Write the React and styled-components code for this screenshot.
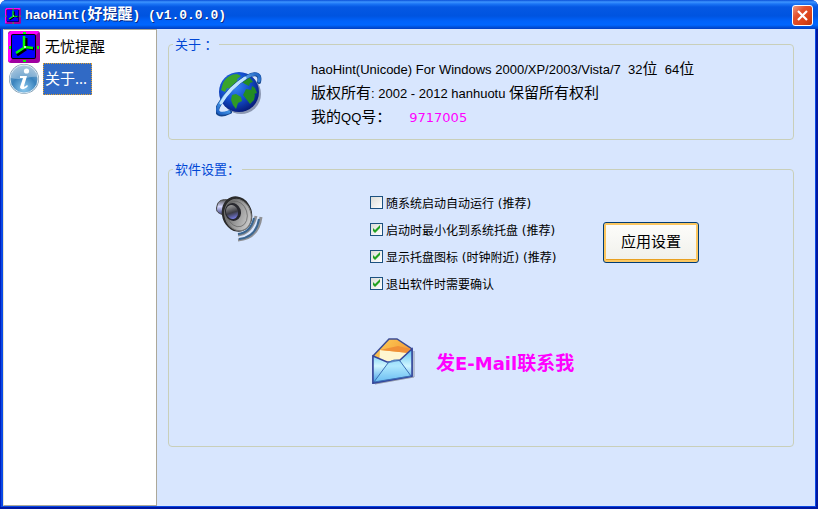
import React, { useState } from "react";
import styled, { createGlobalStyle } from "styled-components";

const Global = createGlobalStyle`
  *, *::before, *::after { box-sizing: border-box; }
  body { margin: 0; background: #fff; font-family: "Noto Sans", "Noto Sans CJK SC", sans-serif; }
`;

const Window = styled.div`
  min-height: 100vh;
  display: flex;
  flex-direction: column;
  border-radius: 7px 7px 0 0;
  overflow: hidden;
  background: #0a48e4;
  box-shadow: inset -2px -2px #0018a0, inset 1px 0 #0020c0;
`;

const TitleBar = styled.header`
  flex: none;
  height: 29px;
  display: flex;
  align-items: center;
  gap: 4px;
  padding: 2px 5px 0;
  background: linear-gradient(
    #0a4fd8 0, #3d95ff 2px, #1a74f5 4px, #0558e3 7px,
    #0054e0 16px, #0062fa 21px, #0066ff 25px, #0051dc 27px, #003fc4 29px
  );
`;

const Title = styled.h1`
  flex: 1;
  margin: 0;
  font: bold 13px/20px "Liberation Mono", "Noto Sans CJK SC", monospace;
  color: #fff;
  text-shadow: 1px 1px #0a2a85;
  white-space: pre;
`;

const Large = styled.span`
  font-size: ${(p) => p.$size}px;
`;

const CloseButton = styled.button`
  width: 21px;
  height: 21px;
  padding: 0;
  display: grid;
  place-items: center;
  border: 1px solid #fff;
  border-radius: 3px;
  background: linear-gradient(135deg, #f09a80, #e2512e 35%, #dc4318 70%, #b83410);
`;

const Body = styled.div`
  flex: 1;
  display: flex;
  margin: 0 3px 3px;
  background: #d8e6fe;
`;

const Sidebar = styled.nav`
  flex: none;
  width: 154px;
  padding: 1px 0 0 4px;
  border: 1px solid #aca899;
  border-left-color: #e6e3cf;
  background: #fff;
`;

const NavItem = styled.button`
  display: flex;
  align-items: center;
  gap: 3px;
  height: 32px;
  padding: 0;
  border: 0;
  background: none;
  font: 15px/28px "Noto Sans", "Noto Sans CJK SC", sans-serif;
  color: #000;
`;

const NavLabel = styled.span`
  padding: 0 ${(p) => (p.$active ? 4 : 1)}px 2px 1px;
  white-space: nowrap;
  border: 1px dotted ${(p) => (p.$active ? "#e0a030" : "transparent")};
  background: ${(p) => (p.$active ? "#316ac5" : "none")};
  color: ${(p) => (p.$active ? "#fff" : "#000")};
`;

const Main = styled.main`
  flex: 1;
  min-width: 0;
  display: flex;
  flex-direction: column;
  gap: 21px;
  padding: 7px 21px 24px 11px;
`;

const Group = styled.fieldset`
  margin: 0;
  min-width: 0;
  padding: ${(p) => p.$top}px 8px ${(p) => p.$bottom}px 47px;
  border: 1px solid #c9cfb9;
  border-radius: 4px;
`;

const Legend = styled.legend`
  margin-left: -43px;
  padding: 0 2px;
  font-size: 13px;
  line-height: 16px;
  color: #0046d5;
  white-space: pre;
`;

const AboutRow = styled.div`
  display: flex;
  align-items: center;
  gap: 47px;
`;

const AboutText = styled.div`
  font: 13px/24px "Liberation Sans", "Noto Sans CJK SC", sans-serif;
  color: #000;
`;

const Line = styled.p`
  margin: 0;
  height: 24px;
  white-space: pre;
`;

const QQ = styled.a`
  margin-left: 18px;
  font: 13px "DejaVu Sans", sans-serif;
  color: #f0f;
  text-decoration: none;
`;

const SettingsGrid = styled.div`
  display: grid;
  grid-template-columns: 154px 233px auto;
  justify-content: start;
  align-items: start;
`;

const IconCell = styled.div`
  padding-top: 6px;
`;

const Option = styled.label`
  display: flex;
  align-items: center;
  gap: 3px;
  height: 27px;
  font: 12px "DejaVu Sans", "Noto Sans CJK SC", sans-serif;
  white-space: pre;
`;

const Checkbox = styled.input`
  appearance: none;
  flex: none;
  width: 13px;
  height: 13px;
  margin: 0;
  border: 1px solid #1c5180;
  background: linear-gradient(135deg, #dcdcd7, #fff);
  &:checked {
    background:
      url("data:image/svg+xml,%3Csvg xmlns='http://www.w3.org/2000/svg' viewBox='0 0 11 11'%3E%3Cpath d='M2 4v3l2 2 5-5V1L4 6z' fill='%2321a121'/%3E%3C/svg%3E"),
      linear-gradient(135deg, #dcdcd7, #fff);
  }
`;

const ApplyButton = styled.button`
  width: 96px;
  height: 41px;
  margin-top: 33px;
  padding: 0 0 4px;
  border: 1px solid #003c74;
  border-radius: 3px;
  box-shadow: inset 0 0 0 2px #fbc761, inset 0 -3px #e8a020;
  background: linear-gradient(#fdfdfb, #f0f0ea);
  font: 15px "Noto Sans CJK SC", sans-serif;
  color: #000;
`;

const MailLink = styled.a`
  grid-column: 2 / -1;
  display: flex;
  align-items: center;
  gap: 18px;
  margin-top: 40px;
  font: bold 18px/26px "DejaVu Sans", "Noto Sans CJK SC", sans-serif;
  color: #f0f;
  text-decoration: none;
  white-space: nowrap;
`;

const MailText = styled.span`
  padding-top: 4px;
`;

const Icon = styled.svg`
  display: block;
  flex: none;
  width: ${(p) => p.$size}px;
  height: ${(p) => p.$size}px;
`;

const ClockIcon = ({ size }) => (
  <Icon $size={size} viewBox="0 0 32 32" aria-hidden="true">
    <rect width="32" height="32" rx="3" fill="#a000a0" />
    <path d="M3 0h26l2 1-3 3H4v24l-3 3-1-2V3z" fill="#f0f" />
    <rect x="3" y="3" width="25" height="25" rx="2" fill="#000" />
    <rect x="4" y="4" width="23" height="23" rx="1" fill="#00f" />
    <path d="M15 1h3v2h-3zM15 29h3v2h-3zM1 15h2v3H1zM29 15h2v3h-2z" fill="#0f0" />
    <path d="M18 7v9l8 2M18 18l-9 6" fill="none" stroke="#000" strokeWidth="3" />
    <path d="M16 5v11l9 1M17 16l-9 6" fill="none" stroke="#0f0" strokeWidth="2.500" />
    <rect x="16" y="15" width="2" height="2" fill="#ddd" />
  </Icon>
);

const InfoIcon = () => (
  <Icon $size={32} viewBox="0 0 32 32" aria-hidden="true">
    <defs>
      <radialGradient id="info" cx=".5" cy=".85" r=".9">
        <stop offset="0" stopColor="#8fcbef" />
        <stop offset=".5" stopColor="#3a83bd" />
        <stop offset="1" stopColor="#8fb4d0" />
      </radialGradient>
    </defs>
    <circle cx="16" cy="16" r="15" fill="#7d99ae" />
    <circle cx="16" cy="16" r="14" fill="url(#info)" stroke="#d8e8f3" />
    <path d="M3 15a13 13 0 0 1 26-1c-7-1-15 4-26 1z" fill="#fff" opacity=".32" />
    <circle cx="18.500" cy="8" r="2.600" fill="#fff" />
    <path d="M12 13h7l-3 10c0 1 1 1 3-1l1 1c-3 4-8 4-8 1l3-9h-3z" fill="#fff" />
  </Icon>
);

const GlobeIcon = () => (
  <Icon $size={48} viewBox="0 0 48 48" aria-hidden="true">
    <defs>
      <radialGradient id="globe" cx=".4" cy=".35" r=".7">
        <stop offset="0" stopColor="#3d8cf4" />
        <stop offset=".5" stopColor="#1450d0" />
        <stop offset="1" stopColor="#051672" />
      </radialGradient>
      <linearGradient id="ring" x1="1" x2="0" y2="1">
        <stop offset="0" stopColor="#1d62c4" />
        <stop offset=".3" stopColor="#6db8f5" />
        <stop offset=".5" stopColor="#d8f0ff" />
        <stop offset=".8" stopColor="#4aa0ee" />
        <stop offset="1" stopColor="#1a5cc0" />
      </linearGradient>
    </defs>
    <circle cx="25" cy="25" r="20" fill="#3f4a66" opacity=".5" />
    <circle cx="23" cy="23" r="20" fill="url(#globe)" />
    <path d="M7 14c3-6 9-9 14-9l4 2-4 3 1 3-5 3-2 4-4-1-2 4-4-2z" fill="#3aa42c" />
    <path d="M26 9l4-2 4 2 3 4-3 1-1 3-4-2-3-2zM36 17l3 2 2 5-3 1-3-3zM30 20l5 1 4 5-1 5-4 4-3-4-4-5z" fill="#238c22" />
    <path d="M16 26l4-1 5 3 1 4-4 2-2 6-3-4-2-5z" fill="#2f9a24" />
    <path d="M43 13c2-8-4-10-12-5C20 14 9 25 3 36c-5 9 1 12 11 7" fill="none" stroke="#14458e" strokeWidth="4" strokeLinecap="round" />
    <path d="M43 12c2-8-4-9-12-4C20 14 9 25 3 36c-4 8 1 10 10 7" fill="none" stroke="url(#ring)" strokeWidth="3" strokeLinecap="round" />
    <path d="M29 9C20 15 11 24 5 34" fill="none" stroke="#bfe3ff" strokeWidth="3" strokeLinecap="round" />
  </Icon>
);

const SpeakerIcon = () => (
  <Icon $size={48} viewBox="0 0 48 48" aria-hidden="true">
    <defs>
      <linearGradient id="magnet" x2="0" y2="1">
        <stop offset="0" stopColor="#555" />
        <stop offset=".45" stopColor="#d5d8ff" />
        <stop offset="1" stopColor="#333878" />
      </linearGradient>
      <linearGradient id="cone" x2="1" y2="1">
        <stop offset="0" stopColor="#444" />
        <stop offset=".5" stopColor="#999" />
        <stop offset="1" stopColor="#e0e0e0" />
      </linearGradient>
      <linearGradient id="cap" x2="0" y2="1">
        <stop offset="0" stopColor="#999" />
        <stop offset=".55" stopColor="#3c3c44" />
        <stop offset="1" stopColor="#7479df" />
      </linearGradient>
    </defs>
    <path d="M1 11c1-6 6-7 12-6l-4 15C3 19-1 17 1 11z" fill="url(#magnet)" stroke="#444" />
    <ellipse cx="21" cy="19" rx="15" ry="18" transform="rotate(-18 21 19)" fill="#2a2a2a" />
    <ellipse cx="22" cy="20" rx="13" ry="16" transform="rotate(-18 22 20)" fill="url(#cone)" stroke="#777" />
    <ellipse cx="21" cy="19" rx="10" ry="13" transform="rotate(-18 21 19)" fill="none" stroke="#666" strokeWidth=".700" />
    <ellipse cx="17" cy="17" rx="8" ry="9" transform="rotate(-18 17 17)" fill="#28282e" />
    <ellipse cx="16" cy="17" rx="6" ry="7" transform="rotate(-18 16 17)" fill="url(#cap)" />
    <path d="M22 40c9-1 15-7 18-19M22 45c13-1 21-9 23-23" fill="none" stroke="#8f9094" strokeWidth="3" />
    <path d="M22 39c9-1 14-7 16-16M23 44c12-1 18-8 20-20" fill="none" stroke="#3c6690" strokeWidth="2" />
  </Icon>
);

const MailIcon = () => (
  <Icon $size={48} viewBox="0 0 48 48" aria-hidden="true">
    <defs>
      <linearGradient id="paper" x2="0" y2="1">
        <stop offset="0" stopColor="#5cc0f0" />
        <stop offset=".5" stopColor="#d0f6ff" />
        <stop offset="1" stopColor="#3f9be6" />
      </linearGradient>
      <linearGradient id="flap" x2="1" y2="1">
        <stop offset="0" stopColor="#ffd35c" />
        <stop offset="1" stopColor="#ec7c20" />
      </linearGradient>
    </defs>
    <path d="M5 47l39-7V14" fill="none" stroke="#8f97a8" />
    <path d="M3 19L19 2h8l15 10v27L3 46z" fill="url(#flap)" stroke="#3c4c94" strokeWidth="1.500" />
    <path d="M10 13l29 3-2 10-28 3z" fill="#fff6d0" />
    <path d="M10 13l29 3 2-4-13-3z" fill="#f09038" />
    <path d="M3 19l14 6h3l10-2 12-11v27L3 46z" fill="url(#paper)" stroke="#34459b" strokeWidth="1.500" />
    <path d="M4 45l14-19c4-3 8-4 12-2l11 15z" fill="#8edafc" fillOpacity=".5" stroke="#3b6fb5" />
  </Icon>
);

const OPTIONS = [
  ["随系统启动自动运行 (推荐)", false],
  ["启动时最小化到系统托盘 (推荐)", true],
  ["显示托盘图标 (时钟附近) (推荐)", true],
  ["退出软件时需要确认", true],
];

export default function App() {
  const [checks, setChecks] = useState(OPTIONS.map(([, on]) => on));
  const toggle = (i) => setChecks(checks.map((on, n) => (n === i ? !on : on)));

  return (
    <Window>
      <Global />
      <TitleBar>
        <ClockIcon size={16} />
        <Title>haoHint(<Large $size={15}>好提醒</Large>) (v1.0.0.0)</Title>
        <CloseButton type="button" aria-label="关闭">
          <Icon $size={13} viewBox="0 0 13 13" aria-hidden="true">
            <path d="M2 2l9 9M11 2l-9 9" stroke="#fff" strokeWidth="2.200" />
          </Icon>
        </CloseButton>
      </TitleBar>
      <Body>
        <Sidebar>
          <NavItem type="button">
            <ClockIcon size={32} />
            <NavLabel>无忧提醒</NavLabel>
          </NavItem>
          <NavItem type="button" aria-current="page">
            <InfoIcon />
            <NavLabel $active>关于...</NavLabel>
          </NavItem>
        </Sidebar>
        <Main>
          <Group $top={5} $bottom={10}>
            <Legend>关于 ：</Legend>
            <AboutRow>
              <GlobeIcon />
              <AboutText>
                <Line>haoHint(Unicode) For Windows 2000/XP/2003/Vista/7  32<Large $size={15}>位</Large>  64<Large $size={15}>位</Large></Line>
                <Line><Large $size={15}>版权所有</Large>: 2002 - 2012 hanhuotu <Large $size={15}>保留所有权利</Large></Line>
                <Line><Large $size={15}>我的</Large>QQ<Large $size={15}>号：</Large><QQ href="#qq">9717005</QQ></Line>
              </AboutText>
            </AboutRow>
          </Group>
          <Group $top={12} $bottom={61}>
            <Legend>软件设置：</Legend>
            <SettingsGrid>
              <IconCell><SpeakerIcon /></IconCell>
              <div>
                {OPTIONS.map(([text], i) => (
                  <Option key={text}>
                    <Checkbox type="checkbox" checked={checks[i]} onChange={() => toggle(i)} />
                    {text}
                  </Option>
                ))}
              </div>
              <ApplyButton type="button">应用设置</ApplyButton>
              <MailLink href="#mail">
                <MailIcon />
                <MailText><Large $size={19}>发</Large>E-Mail<Large $size={19}>联系我</Large></MailText>
              </MailLink>
            </SettingsGrid>
          </Group>
        </Main>
      </Body>
    </Window>
  );
}
